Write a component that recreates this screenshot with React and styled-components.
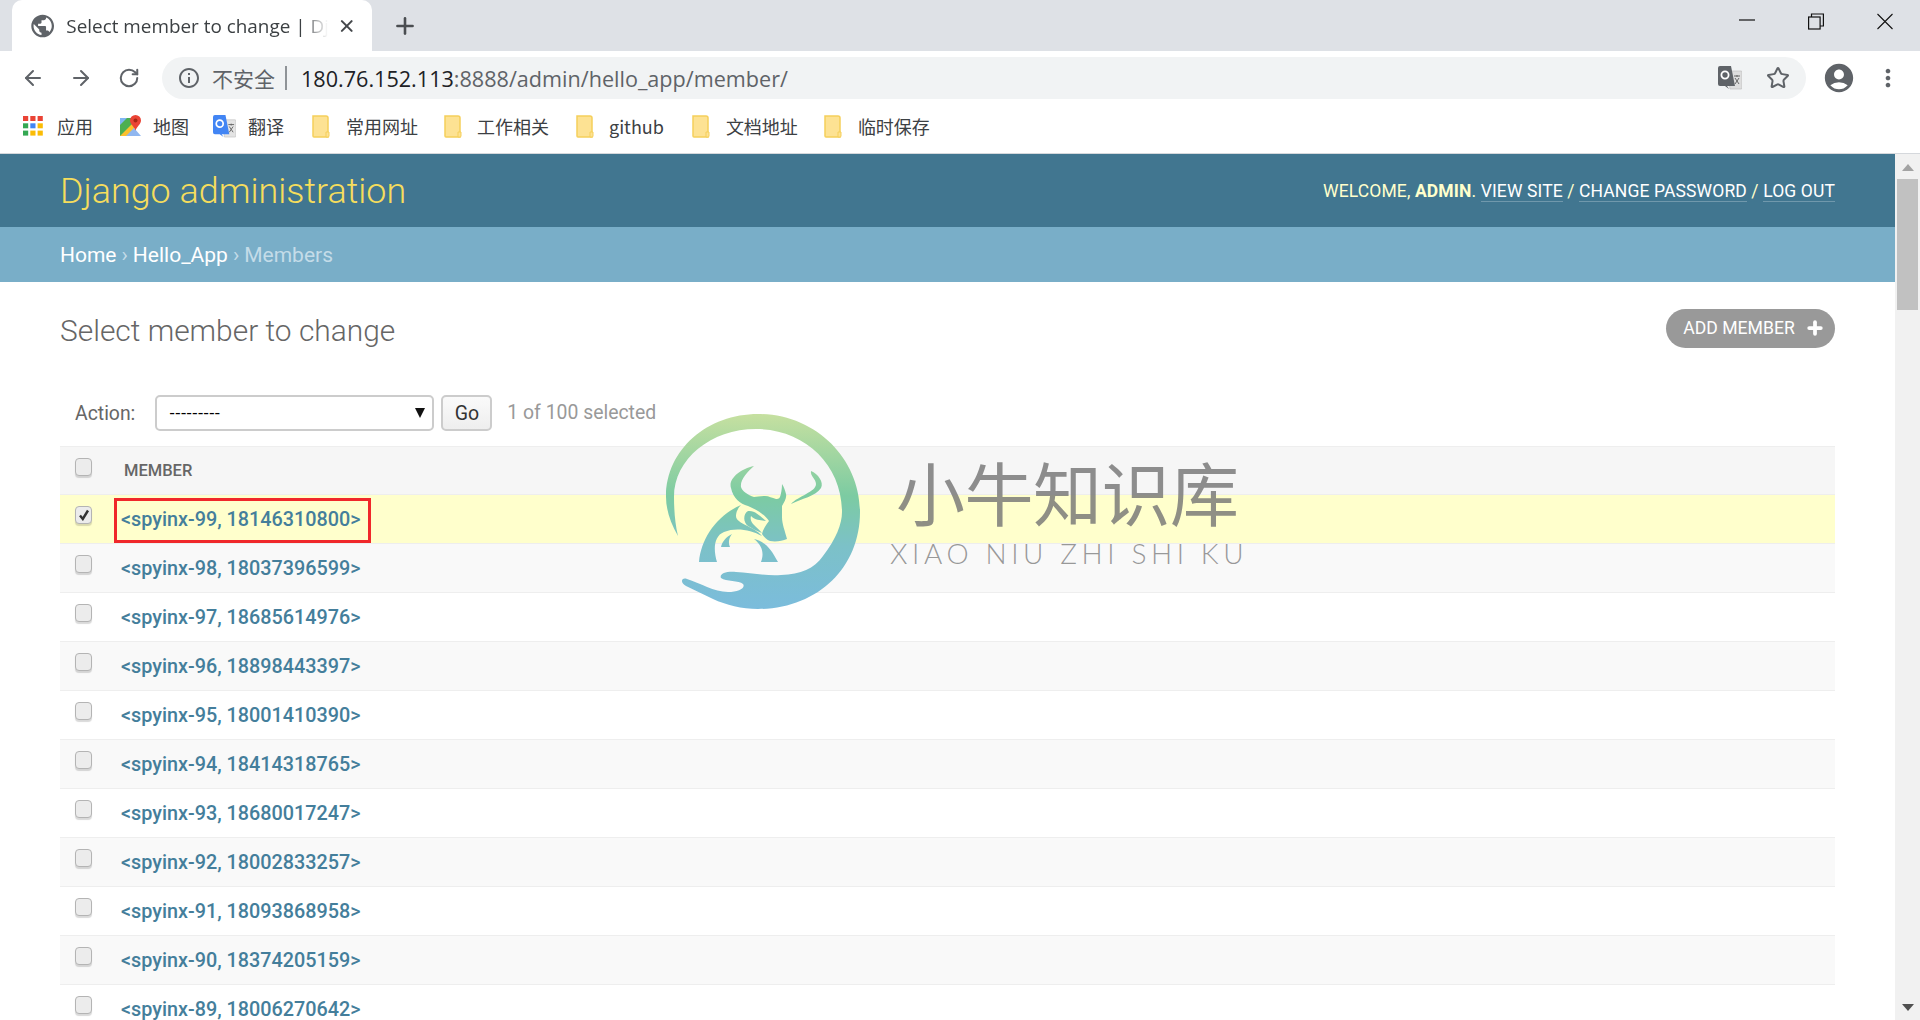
import React from 'react';
import styled, { createGlobalStyle } from 'styled-components';
import { ArrowLeft, ArrowRight, RotateCw, Star, X, Plus } from 'lucide-react';
import { MdPublic, MdAccountCircle, MdInfoOutline, MdMoreVert } from 'react-icons/md';

const GlobalStyle = createGlobalStyle`
  html, body { margin: 0; padding: 0; height: 100%; overflow: hidden; background: #fff; }
  body { font-family: Roboto, "Liberation Sans", sans-serif; }
  * { box-sizing: border-box; }
`;

const Page = styled.div`
  height: 1020px;
  display: flex;
  flex-direction: column;
  overflow: hidden;
  position: relative;
`;

/* browser chrome */
const TabStrip = styled.div`
  height: 51px;
  background: #dee1e6;
  display: flex;
  align-items: flex-end;
  padding-left: 12px;
  flex: none;
`;

const Tab = styled.div`
  width: 360px;
  height: 51px;
  background: #fff;
  border-radius: 10px 10px 0 0;
  display: flex;
  align-items: center;
  padding: 0 16px 0 17px;
  color: #3c4043;
`;

const TabTitle = styled.span`
  margin-left: 10px;
  width: 268px;
  font: 400 18.9px "Open Sans", "Liberation Sans", sans-serif;
  white-space: nowrap;
  overflow: hidden;
  -webkit-mask-image: linear-gradient(to right, #000 90%, transparent 100%);
  mask-image: linear-gradient(to right, #000 90%, transparent 100%);
`;

const NewTab = styled.div`
  width: 26px;
  height: 26px;
  margin: 0 0 12px 20px;
  color: #4a4d51;
  display: flex;
  align-items: center;
  justify-content: center;
`;

const WindowControls = styled.div`
  margin-left: auto;
  height: 51px;
  display: flex;
  align-items: flex-start;
  padding: 13px 27px 0 0;
  gap: 53px;
  color: #111;
`;

const Toolbar = styled.div`
  height: 51px;
  flex: none;
  display: flex;
  align-items: center;
  padding: 3px 0 0 21px;
  color: #5f6368;
`;

const NavButton = styled.div`
  width: 24px;
  height: 24px;
  margin-right: 24px;
  display: flex;
  align-items: center;
  justify-content: center;
`;

const Omnibox = styled.div`
  width: 1644px;
  height: 42px;
  margin-left: -3px;
  border-radius: 21px;
  background: #f1f3f4;
  display: flex;
  align-items: center;
  padding: 0 16px 0 15px;
`;

const Insecure = styled.span`
  font: 400 21px "Noto Sans CJK SC", sans-serif;
  color: #5f6368;
  margin-left: 11px;
  padding-right: 10px;
  border-right: 2px solid #8f9397;
  line-height: 24px;
`;

const Url = styled.span`
  margin-left: 14px;
  font: 400 21.6px "Open Sans", "Liberation Sans", sans-serif;
  color: #5f6368;
  b { font-weight: 400; color: #202124; }
`;

const OmniIcons = styled.div`
  margin-left: auto;
  display: flex;
  align-items: center;
  gap: 24px;
`;

const ProfileIcons = styled.div`
  display: flex;
  align-items: center;
  margin-left: 16px;
  gap: 18px;
`;

const Bookmarks = styled.div`
  height: 52px;
  flex: none;
  display: flex;
  align-items: center;
  padding: 0 0 3px 23px;
  border-bottom: 1px solid #d5d8dc;
`;

const Bookmark = styled.div`
  display: flex;
  align-items: center;
  gap: ${({ $gap }) => $gap}px;
  margin-right: ${({ $after }) => $after}px;
  font: 400 18px "Noto Sans CJK SC", "Open Sans", sans-serif;
  color: #3c4043;
  white-space: nowrap;
`;

/* django admin */
const Viewport = styled.div`
  flex: 1;
  min-height: 0;
  display: flex;
`;

const Main = styled.div`
  flex: 1;
  min-width: 0;
  overflow: hidden;
`;

const Header = styled.header`
  height: 73px;
  background: #417690;
  display: flex;
  align-items: center;
  justify-content: space-between;
  padding: 0 60px;
`;

const Brand = styled.h1`
  margin: 0;
  font: 300 35.9px Roboto, sans-serif;
  color: #f5dd5d;
`;

const UserTools = styled.div`
  margin-top: 1px;
  font: 400 17.5px Roboto, sans-serif;
  color: #ffc;
  text-transform: uppercase;
  letter-spacing: 0.12px;
  b { font-weight: 700; }
  a {
    color: #fff;
    border-bottom: 1px solid rgba(255, 255, 255, 0.25);
    text-decoration: none;
  }
`;

const Breadcrumbs = styled.div`
  height: 55px;
  background: #79aec8;
  display: flex;
  align-items: center;
  padding: 0 60px;
  font: 400 21px Roboto, sans-serif;
  color: #c4dce8;
  a { color: #fff; }
  i { font-style: normal; margin: 0 5px; }
`;

const Content = styled.div`
  padding: 27px 60px 0;
`;

const TitleRow = styled.div`
  height: 39px;
  display: flex;
  align-items: center;
  justify-content: space-between;
`;

const Title = styled.h2`
  margin: 4px 0 0;
  font: 300 29.9px Roboto, sans-serif;
  color: #666;
`;

const AddButton = styled.div`
  height: 39px;
  width: 169px;
  border-radius: 20px;
  background: #999;
  color: #fff;
  display: flex;
  align-items: center;
  justify-content: center;
  gap: 10px;
  padding: 0 0 1px 7px;
  font: 400 17.6px Roboto, sans-serif;
  text-transform: uppercase;
`;

const ActionBar = styled.div`
  margin-top: 47px;
  height: 36px;
  display: flex;
  align-items: center;
  padding-left: 15px;
  font: 400 19.4px Roboto, sans-serif;
  color: #666;
`;

const ActionSelect = styled.div`
  width: 279px;
  height: 36px;
  margin-left: 20px;
  border: 2px solid #ccc;
  border-radius: 5px;
  background: #fff;
  display: flex;
  align-items: center;
  justify-content: space-between;
  padding: 0 7px 0 12px;
  font: 400 17px "Liberation Sans", sans-serif;
  color: #000;
`;

const GoButton = styled.div`
  width: 51px;
  height: 36px;
  margin-left: 7px;
  border: 2px solid #ccc;
  border-radius: 5px;
  background: linear-gradient(#fafafa, #eee);
  display: flex;
  align-items: center;
  justify-content: center;
  color: #333;
  font-size: 19.500px;
`;

const Counter = styled.span`
  margin-left: 15px;
  margin-top: -2px;
  color: #999;
`;

const Table = styled.div`
  margin-top: 15px;
  border-top: 1px solid #eee;
`;

const HeadRow = styled.div`
  height: 48px;
  background: #f6f6f6;
  border-bottom: 1px solid #eee;
  display: flex;
  padding-left: 15px;
`;

const HeadLabel = styled.span`
  margin: 14px 0 0 32px;
  font: 500 16.5px Roboto, sans-serif;
  color: #666;
  text-transform: uppercase;
`;

const Row = styled.div`
  height: 49px;
  flex: none;
  display: flex;
  padding-left: 15px;
  border-bottom: 1px solid #eee;
  background: ${({ $selected, $even }) => ($selected ? '#ffc' : $even ? '#f9f9f9' : '#fff')};
`;

const Box = styled.div`
  width: 17px;
  height: 18px;
  margin-top: 11px;
  flex: none;
  border: 1px solid #b4b4b4;
  border-radius: 4px;
  background: #ececec;
  box-shadow: 0 2px 1px rgba(0, 0, 0, 0.15);
  display: flex;
  align-items: center;
  justify-content: center;
`;

const MemberCell = styled.div`
  position: relative;
  margin: 13px 0 0 29px;
  font: 500 19.8px Roboto, sans-serif;
  color: #447e9b;
  white-space: nowrap;
`;

const Highlight = styled.div`
  position: absolute;
  left: -7px;
  top: -10px;
  width: 257px;
  height: 45px;
  border: 3px solid #f0282a;
`;

/* scrollbar */
const Scrollbar = styled.div`
  width: 25px;
  flex: none;
  background: #f1f1f1;
  display: flex;
  flex-direction: column;
  align-items: center;
  justify-content: space-between;
`;

const ScrollTrack = styled.div`
  width: 100%;
  display: flex;
  flex-direction: column;
  align-items: center;
`;

const ScrollUp = styled.div`
  width: 0;
  height: 0;
  margin-top: 10px;
  border: 6px solid transparent;
  border-top: 0;
  border-bottom: 7px solid #a3a3a3;
`;

const ScrollDown = styled.div`
  width: 0;
  height: 0;
  margin-bottom: 9px;
  border: 6px solid transparent;
  border-bottom: 0;
  border-top: 7px solid #505050;
`;

const ScrollThumb = styled.div`
  width: 21px;
  height: 131px;
  margin-top: 8px;
  background: #c1c1c1;
`;

/* watermark sits above the table */
const Watermark = styled.div`
  position: absolute;
  left: 666px;
  top: 414px;
  display: flex;
  pointer-events: none;
`;

const MarkText = styled.div`
  margin: 34px 0 0 36px;
  display: flex;
  flex-direction: column;
  align-items: flex-start;
`;

const MarkCn = styled.div`
  font: 400 69px/86px "Noto Sans CJK SC", sans-serif;
  letter-spacing: -0.5px;
  color: rgba(115, 115, 115, 0.8);
  white-space: nowrap;
`;

const MarkEn = styled.div`
  font: 300 28px/30px Lato, sans-serif;
  letter-spacing: 4.6px;
  color: rgba(120, 120, 120, 0.75);
  white-space: nowrap;
  margin: 4px 0 0 -6px;
`;

const Folder = () => (
  <svg width="18" height="23" viewBox="0 0 18 23">
    <path d="M1 1h13a2 2 0 0 1 2 2v19H2a1 1 0 0 1-1-1z" fill="#fde293" stroke="#f5cf5b" strokeWidth="1.5" />
    <path d="M14 22v-5h3v4a1 1 0 0 1-1 1z" fill="#fde293" stroke="#f5cf5b" />
  </svg>
);

const AppsIcon = () => {
  const colors = ['#ea4335', '#ea4335', '#ea4335', '#34a853', '#4285f4', '#fbbc05', '#34a853', '#fbbc05', '#fbbc05'];
  return (
    <svg width="20" height="20" viewBox="0 0 20 20">
      {colors.map((c, i) => (
        <rect key={i} x={(i % 3) * 7.3} y={Math.floor(i / 3) * 7.3} width="5.2" height="5" fill={c} />
      ))}
    </svg>
  );
};

const MapsIcon = () => (
  <svg width="23" height="22" viewBox="0 0 23 22">
    <path d="M1 3h14v18H1z" fill="#4caf50" />
    <path d="M1 21 15 7v14z" fill="#fbc02d" />
    <path d="M7 21l8-8 7 8z" fill="#90b7f0" />
    <path d="M1 3h7l-7 7z" fill="#7fb6f3" />
    <path d="M16.5 0a5.5 5.5 0 0 1 5.5 5.5c0 3.5-4 6-5.5 10-1.5-4-5.5-6.500-5.500-10A5.500 5.500 0 0 1 16.500 0z" fill="#ea4335" />
    <circle cx="16.500" cy="5.500" r="2" fill="#a52714" />
  </svg>
);

const TranslateIcon = ({ main = '#4285f4', side = '#e4e4e4', mark = '#fff', size = 24 }) => (
  <svg width={size} height={size} viewBox="0 0 24 24">
    <path d="M10 5h13a1 1 0 0 1 1 1v16a1 1 0 0 1-1 1H12z" fill={side} stroke="#bbb" strokeWidth="0.6" />
    <path d="M2 0h11l4 20H9l2 3-4-3H2a2 2 0 0 1-2-2V2a2 2 0 0 1 2-2z" fill={main} />
    <circle cx="7" cy="9" r="3.600" fill="none" stroke={mark} strokeWidth="1.800" />
    <path d="M16 10h6M19 9v2M17 18l4-6M17 12l4 6" stroke="#666" strokeWidth="1" fill="none" />
  </svg>
);

const RestoreIcon = () => (
  <svg width="16" height="17" viewBox="0 0 16 17" fill="none" stroke="#111" strokeWidth="1.200">
    <rect x="0.600" y="4" width="11.500" height="12" />
    <path d="M3.500 4V1h11.900v12h-3.300" />
  </svg>
);

const MinimizeIcon = () => (
  <svg width="16" height="17" viewBox="0 0 16 17" stroke="#111" strokeWidth="1.200">
    <path d="M0 7h16" />
  </svg>
);

const CloseIcon = () => (
  <svg width="16" height="17" viewBox="0 0 16 17" stroke="#111" strokeWidth="1.100">
    <path d="M0.500 1 15.500 16M15.500 1 0.500 16" />
  </svg>
);

const LogoMark = () => (
  <svg width="194" height="195" viewBox="0 0 194 195">
    <defs>
      <linearGradient id="logoFade" gradientUnits="userSpaceOnUse" x1="0" y1="0" x2="0" y2="195">
        <stop offset="0" stopColor="#c6e0a0" />
        <stop offset="0.42" stopColor="#7ccba2" />
        <stop offset="0.68" stopColor="#7cc1c8" />
        <stop offset="1" stopColor="#7bbcdc" />
      </linearGradient>
    </defs>
    <g fill="url(#logoFade)">
      <path d="M12 122C4 108 0 95 0 83 0 35 42 0 92 0c58 0 102 45 102 98 0 57-44 97-102 97-16 0-32-4-45-10-9-4-18-9-27-13-6-3-5-9 1-7 13 4 27 13 41 13 10 0 18-4 15-8-4-4-17-2-22-6-2-4 5-7 15-6 15 1 30 4 45 3 20-1 33-6 42-19 13-17 19-32 19-44 0-48-38-83-86-83C45 15 8 45 8 83c0 12 1 27 4 39z" />
      <path d="M88 52C74 55 62 65 65 74c2 10 9 16 17 18 10 4 18 10 21 15-3 4-6 8-7 13 2 3 5 6 8 7 6 1 12 0 17-2-2-8-5-15-5-22 0-4 0-7 0-11 2-4 5-8 4-12-1-4-2-7-4-10 0 5-1 10-2 13-1 2-3 2-4 2-4-1-7-3-11-3-5 0-8 1-11 1-6-2-12-6-13-10-1-7 6-15 13-21z" />
      <path d="M145 57c7 3 13 11 10 17-5 8-20 11-30 16 7-8 25-12 25-20 0-5-6-8-5-13z" />
      <path d="M75 91C50 102 35 125 33 148h18c-4-13-3-26 7-30 12-5 27-2 38 4-8-10-26-12-26-20 0-4 2-8 5-11z" />
      <path d="M82 97c-5 3-5 11 0 15 5 3 9 5 14 7-6-7-13-10-11-17 5 5 11 4 15 5-6-5-11-11-18-10z" />
      <path d="M66 120c-6 3-10 8-11 13h9c-2-5-1-9 2-13z" />
      <path d="M88 125c12 3 17 10 24 23H95c3-8 2-16-7-23z" />
    </g>
  </svg>
);

const bookmarks = [
  { icon: <AppsIcon />, label: '应用', gap: 14, after: 26 },
  { icon: <MapsIcon />, label: '地图', gap: 11, after: 24 },
  { icon: <TranslateIcon size={23} />, label: '翻译', gap: 12, after: 28 },
  { icon: <Folder />, label: '常用网址', gap: 16, after: 26 },
  { icon: <Folder />, label: '工作相关', gap: 15, after: 27 },
  { icon: <Folder />, label: 'github', gap: 15, after: 28 },
  { icon: <Folder />, label: '文档地址', gap: 16, after: 26 },
  { icon: <Folder />, label: '临时保存', gap: 16, after: 0 },
];

const members = [
  ['99', '18146310800'],
  ['98', '18037396599'],
  ['97', '18685614976'],
  ['96', '18898443397'],
  ['95', '18001410390'],
  ['94', '18414318765'],
  ['93', '18680017247'],
  ['92', '18002833257'],
  ['91', '18093868958'],
  ['90', '18374205159'],
  ['89', '18006270642'],
];

export default function App() {
  return (
    <Page>
      <GlobalStyle />
      <TabStrip>
        <Tab>
          <MdPublic size={28} color="#5f6368" />
          <TabTitle>Select member to change | Django</TabTitle>
          <X size={20} strokeWidth={2.6} color="#45484c" style={{ marginLeft: 9 }} />
        </Tab>
        <NewTab>
          <Plus size={26} strokeWidth={2.4} />
        </NewTab>
        <WindowControls>
          <MinimizeIcon />
          <RestoreIcon />
          <CloseIcon />
        </WindowControls>
      </TabStrip>

      <Toolbar>
        <NavButton><ArrowLeft size={24} strokeWidth={2} /></NavButton>
        <NavButton><ArrowRight size={24} strokeWidth={2} /></NavButton>
        <NavButton><RotateCw size={22} strokeWidth={2.2} /></NavButton>
        <Omnibox>
          <MdInfoOutline size={24} />
          <Insecure>不安全</Insecure>
          <Url><b>180.76.152.113</b>:8888/admin/hello_app/member/</Url>
          <OmniIcons>
            <TranslateIcon main="#5f6368" side="#ddd" />
            <Star size={24} strokeWidth={2} />
          </OmniIcons>
        </Omnibox>
        <ProfileIcons>
          <MdAccountCircle size={34} />
          <MdMoreVert size={28} />
        </ProfileIcons>
      </Toolbar>

      <Bookmarks>
        {bookmarks.map((b) => (
          <Bookmark key={b.label} $gap={b.gap} $after={b.after}>
            {b.icon}
            <span>{b.label}</span>
          </Bookmark>
        ))}
      </Bookmarks>

      <Viewport>
        <Main>
          <Header>
            <Brand>Django administration</Brand>
            <UserTools>
              Welcome, <b>admin</b>. <a>View site</a> / <a>Change password</a> / <a>Log out</a>
            </UserTools>
          </Header>
          <Breadcrumbs>
            <a>Home</a><i>›</i><a>Hello_App</a><i>›</i>Members
          </Breadcrumbs>
          <Content>
            <TitleRow>
              <Title>Select member to change</Title>
              <AddButton>
                Add member
                <Plus size={20} strokeWidth={4.5} />
              </AddButton>
            </TitleRow>
            <ActionBar>
              Action:
              <ActionSelect>
                ---------
                <svg width="10" height="12" viewBox="0 0 10 12"><path d="M0 1h10L5 11z" fill="#111" /></svg>
              </ActionSelect>
              <GoButton>Go</GoButton>
              <Counter>1 of 100 selected</Counter>
            </ActionBar>
            <Table>
              <HeadRow>
                <Box />
                <HeadLabel>Member</HeadLabel>
              </HeadRow>
              {members.map(([id, phone], i) => (
                <Row key={id} $selected={i === 0} $even={i % 2 === 1}>
                  <Box>
                    {i === 0 && (
                      <svg width="12" height="12" viewBox="0 0 12 12">
                        <path d="M2 6.500 4.800 10 10 1.500" fill="none" stroke="#333" strokeWidth="2.400" />
                      </svg>
                    )}
                  </Box>
                  <MemberCell>
                    {`<spyinx-${id}, ${phone}>`}
                    {i === 0 && <Highlight />}
                  </MemberCell>
                </Row>
              ))}
            </Table>
          </Content>
        </Main>
        <Scrollbar>
          <ScrollTrack>
            <ScrollUp />
            <ScrollThumb />
          </ScrollTrack>
          <ScrollDown />
        </Scrollbar>
      </Viewport>

      <Watermark>
        <LogoMark />
        <MarkText>
          <MarkCn>小牛知识库</MarkCn>
          <MarkEn>XIAO NIU ZHI SHI KU</MarkEn>
        </MarkText>
      </Watermark>
    </Page>
  );
}
